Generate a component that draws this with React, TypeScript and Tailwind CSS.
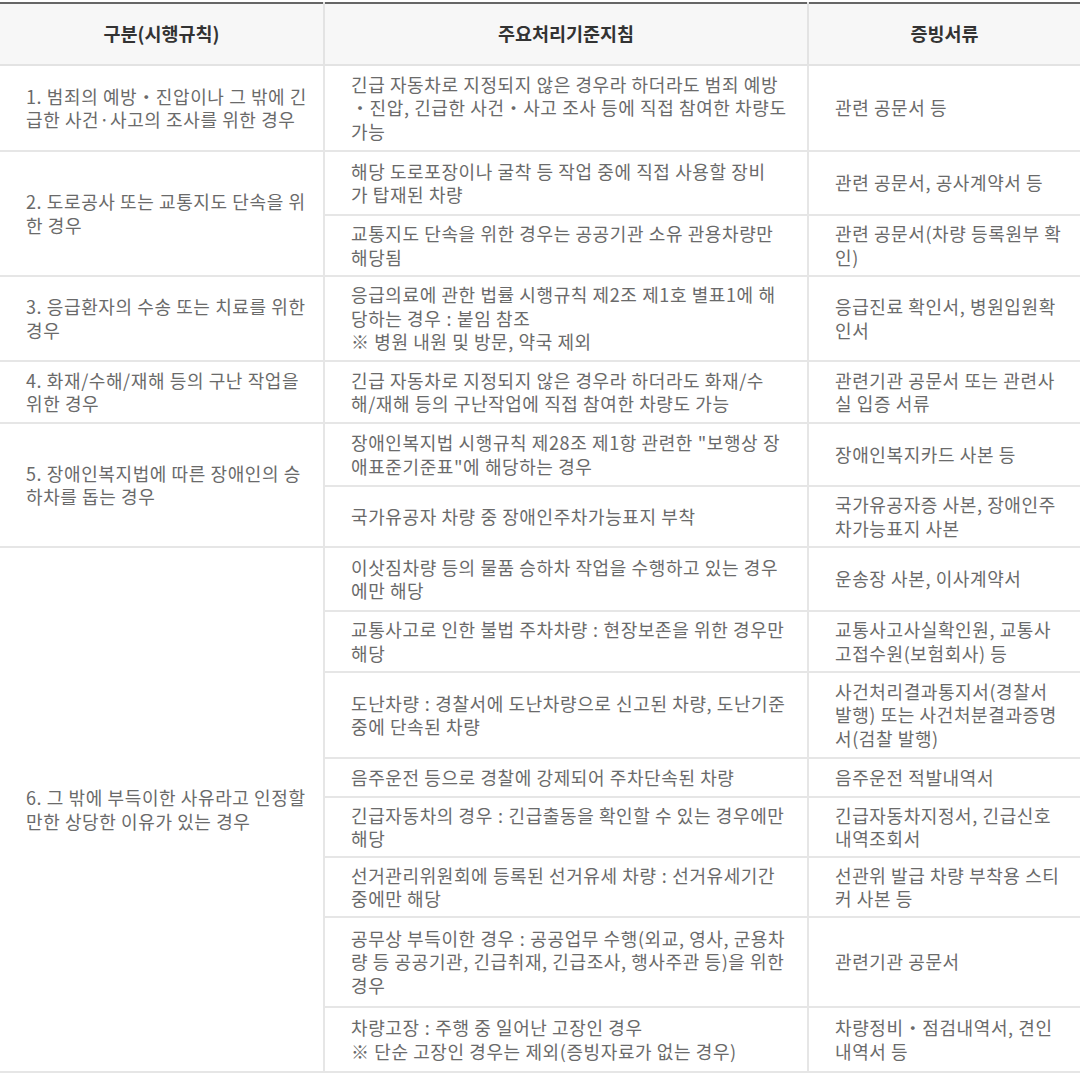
import React from "react";

interface Item {
  h: string;
  guide: string[];
  docs: string[];
}

interface Group {
  label: string[];
  items: Item[];
}

const GROUPS: Group[] = [
  {
    label: ["1. 범죄의 예방・진압이나 그 밖에 긴", "급한 사건·사고의 조사를 위한 경우"],
    items: [
      {
        h: "h-[86px]",
        guide: [
          "긴급 자동차로 지정되지 않은 경우라 하더라도 범죄 예방",
          "・진압, 긴급한 사건・사고 조사 등에 직접 참여한 차량도",
          "가능",
        ],
        docs: ["관련 공문서 등"],
      },
    ],
  },
  {
    label: ["2. 도로공사 또는 교통지도 단속을 위", "한 경우"],
    items: [
      {
        h: "h-[64px]",
        guide: ["해당 도로포장이나 굴착 등 작업 중에 직접 사용할 장비", "가 탑재된 차량"],
        docs: ["관련 공문서, 공사계약서 등"],
      },
      {
        h: "h-[61px]",
        guide: ["교통지도 단속을 위한 경우는 공공기관 소유 관용차량만", "해당됨"],
        docs: ["관련 공문서(차량 등록원부 확", "인)"],
      },
    ],
  },
  {
    label: ["3. 응급환자의 수송 또는 치료를 위한", "경우"],
    items: [
      {
        h: "h-[85px]",
        guide: [
          "응급의료에 관한 법률 시행규칙 제2조 제1호 별표1에 해",
          "당하는 경우 : 붙임 참조",
          "※ 병원 내원 및 방문, 약국 제외",
        ],
        docs: ["응급진료 확인서, 병원입원확", "인서"],
      },
    ],
  },
  {
    label: ["4. 화재/수해/재해 등의 구난 작업을", "위한 경우"],
    items: [
      {
        h: "h-[62px]",
        guide: [
          "긴급 자동차로 지정되지 않은 경우라 하더라도 화재/수",
          "해/재해 등의 구난작업에 직접 참여한 차량도 가능",
        ],
        docs: ["관련기관 공문서 또는 관련사", "실 입증 서류"],
      },
    ],
  },
  {
    label: ["5. 장애인복지법에 따른 장애인의 승", "하차를 돕는 경우"],
    items: [
      {
        h: "h-[63px]",
        guide: [
          "장애인복지법 시행규칙 제28조 제1항 관련한 \"보행상 장",
          "애표준기준표\"에 해당하는 경우",
        ],
        docs: ["장애인복지카드 사본 등"],
      },
      {
        h: "h-[61px]",
        guide: ["국가유공자 차량 중 장애인주차가능표지 부착"],
        docs: ["국가유공자증 사본, 장애인주", "차가능표지 사본"],
      },
    ],
  },
  {
    label: ["6. 그 밖에 부득이한 사유라고 인정할", "만한 상당한 이유가 있는 경우"],
    items: [
      {
        h: "h-[64px]",
        guide: ["이삿짐차량 등의 물품 승하차 작업을 수행하고 있는 경우", "에만 해당"],
        docs: ["운송장 사본, 이사계약서"],
      },
      {
        h: "h-[61px]",
        guide: ["교통사고로 인한 불법 주차차량 : 현장보존을 위한 경우만", "해당"],
        docs: ["교통사고사실확인원, 교통사", "고접수원(보험회사) 등"],
      },
      {
        h: "h-[86px]",
        guide: ["도난차량 : 경찰서에 도난차량으로 신고된 차량, 도난기준", "중에 단속된 차량"],
        docs: ["사건처리결과통지서(경찰서", "발행) 또는 사건처분결과증명", "서(검찰 발행)"],
      },
      {
        h: "h-[39px]",
        guide: ["음주운전 등으로 경찰에 강제되어 주차단속된 차량"],
        docs: ["음주운전 적발내역서"],
      },
      {
        h: "h-[60px]",
        guide: ["긴급자동차의 경우 : 긴급출동을 확인할 수 있는 경우에만", "해당"],
        docs: ["긴급자동차지정서, 긴급신호", "내역조회서"],
      },
      {
        h: "h-[60px]",
        guide: ["선거관리위원회에 등록된 선거유세 차량 : 선거유세기간", "중에만 해당"],
        docs: ["선관위 발급 차량 부착용 스티", "커 사본 등"],
      },
      {
        h: "h-[90px]",
        guide: [
          "공무상 부득이한 경우 : 공공업무 수행(외교, 영사, 군용차",
          "량 등 공공기관, 긴급취재, 긴급조사, 행사주관 등)을 위한",
          "경우",
        ],
        docs: ["관련기관 공문서"],
      },
      {
        h: "h-[65px]",
        guide: ["차량고장 : 주행 중 일어난 고장인 경우", "※ 단순 고장인 경우는 제외(증빙자료가 없는 경우)"],
        docs: ["차량정비・점검내역서, 견인", "내역서 등"],
      },
    ],
  },
];

// the " : " separators sit wider in the original, so pad the colon a little
function Line({ text }: { text: string }) {
  const parts = text.split(" : ");
  return (
    <span className="block whitespace-nowrap">
      {parts.map((p, i) => (
        <React.Fragment key={i}>
          {i > 0 && <span className="mx-[5px]">:</span>}
          {p}
        </React.Fragment>
      ))}
    </span>
  );
}

function Lines({ lines }: { lines: string[] }) {
  return (
    <>
      {lines.map((l, i) => (
        <Line key={i} text={l} />
      ))}
    </>
  );
}

export default function App() {
  const cell =
    "border-b-2 border-[#e6e6e6] px-[26px] align-middle text-left text-[18px] leading-[23.5px] tracking-[0.6px] text-[#6a6a6a]";
  const head = "border-b-2 border-[#e3e3e3] text-center text-[18.5px] font-bold text-[#333]";

  return (
    <div className="w-[1080px] bg-white pt-[2px] font-['Noto_Sans_CJK_KR','Noto_Sans',sans-serif]">
      <table className="w-[1080px] table-fixed border-collapse border-t-2 border-t-[#666]">
        <colgroup>
          <col className="w-[324px]" />
          <col className="w-[484px]" />
          <col className="w-[272px]" />
        </colgroup>
        <thead>
          <tr className="h-[62px] bg-[#f7f7f7]">
            <th className={head}>구분(시행규칙)</th>
            <th className={`${head} border-l-2`}>주요처리기준지침</th>
            <th className={`${head} border-l-2`}>증빙서류</th>
          </tr>
        </thead>
        <tbody>
          {GROUPS.map((g, gi) =>
            g.items.map((it, ii) => (
              <tr key={`${gi}-${ii}`} className={it.h}>
                {ii === 0 && (
                  <td rowSpan={g.items.length} className={cell}>
                    <Lines lines={g.label} />
                  </td>
                )}
                <td className={`${cell} border-l-2`}>
                  <Lines lines={it.guide} />
                </td>
                <td className={`${cell} border-l-2`}>
                  <Lines lines={it.docs} />
                </td>
              </tr>
            ))
          )}
        </tbody>
      </table>
    </div>
  );
}
